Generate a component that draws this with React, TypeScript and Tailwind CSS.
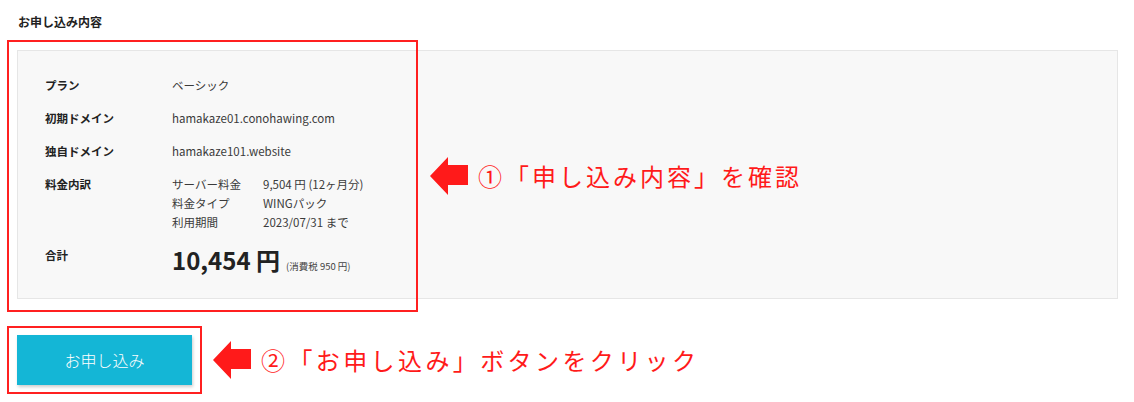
import React from "react";

const jp = "font-['Noto_Sans_CJK_JP','Noto_Sans',sans-serif]";

function Arrow() {
  return (
    <svg width="38" height="38" viewBox="0 0 38 38" className="shrink-0">
      <polygon points="0,19 18,0 18,8 38,8 38,28 18,28 18,38" fill="#ff1a1a" />
    </svg>
  );
}

export default function App() {
  return (
    <div className={`w-[1134px] h-[402px] bg-white text-[#3a3a3a] ${jp}`}>
      <div className="pl-[18px] pt-[13px] text-[12px] leading-[18px] font-bold text-[#222]">
        お申し込み内容
      </div>

      <div className="relative mt-[19px] ml-[17px] mr-[16px] h-[249px] border border-[#e6e6e6] bg-[#f8f8f8] flex">
        <div className="w-[400px] pl-[27px] pt-[25px] text-[11.5px] leading-[19px] flex flex-col gap-[14px]">
          <div className="flex">
            <div className="w-[127px] font-bold text-[#222]">プラン</div>
            <div>ベーシック</div>
          </div>
          <div className="flex">
            <div className="w-[127px] font-bold text-[#222]">初期ドメイン</div>
            <div>hamakaze01.conohawing.com</div>
          </div>
          <div className="flex">
            <div className="w-[127px] font-bold text-[#222]">独自ドメイン</div>
            <div>hamakaze101.website</div>
          </div>
          <div className="flex">
            <div className="w-[127px] font-bold text-[#222]">料金内訳</div>
            <div className="flex flex-col">
              <div className="flex">
                <div className="w-[91px]">サーバー料金</div>
                <div>9,504 円 (12ヶ月分)</div>
              </div>
              <div className="flex">
                <div className="w-[91px]">料金タイプ</div>
                <div>WINGパック</div>
              </div>
              <div className="flex">
                <div className="w-[91px]">利用期間</div>
                <div>2023/07/31 まで</div>
              </div>
            </div>
          </div>
          <div className="flex items-start">
            <div className="w-[127px] font-bold text-[#222]">合計</div>
            <div className="flex items-baseline">
              <span className="text-[24px] leading-[28px] font-bold text-[#222]">10,454 円</span>
              <span className="ml-[6px] text-[9.5px] text-[#444]">(消費税 950 円)</span>
            </div>
          </div>
        </div>

        <div className="self-center ml-[12px] mt-[2px] flex items-center gap-[10px]">
          <Arrow />
          <span className="text-[24px] leading-[30px] tracking-[3px] text-[#ff1a1a]">
            ①「申し込み内容」を確認
          </span>
        </div>

        <div className="absolute left-[-11px] top-[-11px] w-[411px] h-[272px] border-2 border-[#ff2020] pointer-events-none" />
      </div>

      <div className="relative mt-[36px] ml-[17px] flex items-center">
        <button className="w-[175px] h-[50px] bg-[#14b6d6] text-white text-[16px] font-light shadow-[1px_2px_3px_rgba(0,0,0,0.2)]">
          お申し込み
        </button>
        <div className="ml-[21px] flex items-center gap-[10px]">
          <Arrow />
          <span className="text-[24px] leading-[30px] tracking-[3.4px] text-[#ff1a1a]">
            ②「お申し込み」ボタンをクリック
          </span>
        </div>
        <div className="absolute left-[-10px] top-[-9px] w-[195px] h-[68px] border-2 border-[#ff2020] pointer-events-none" />
      </div>
    </div>
  );
}
